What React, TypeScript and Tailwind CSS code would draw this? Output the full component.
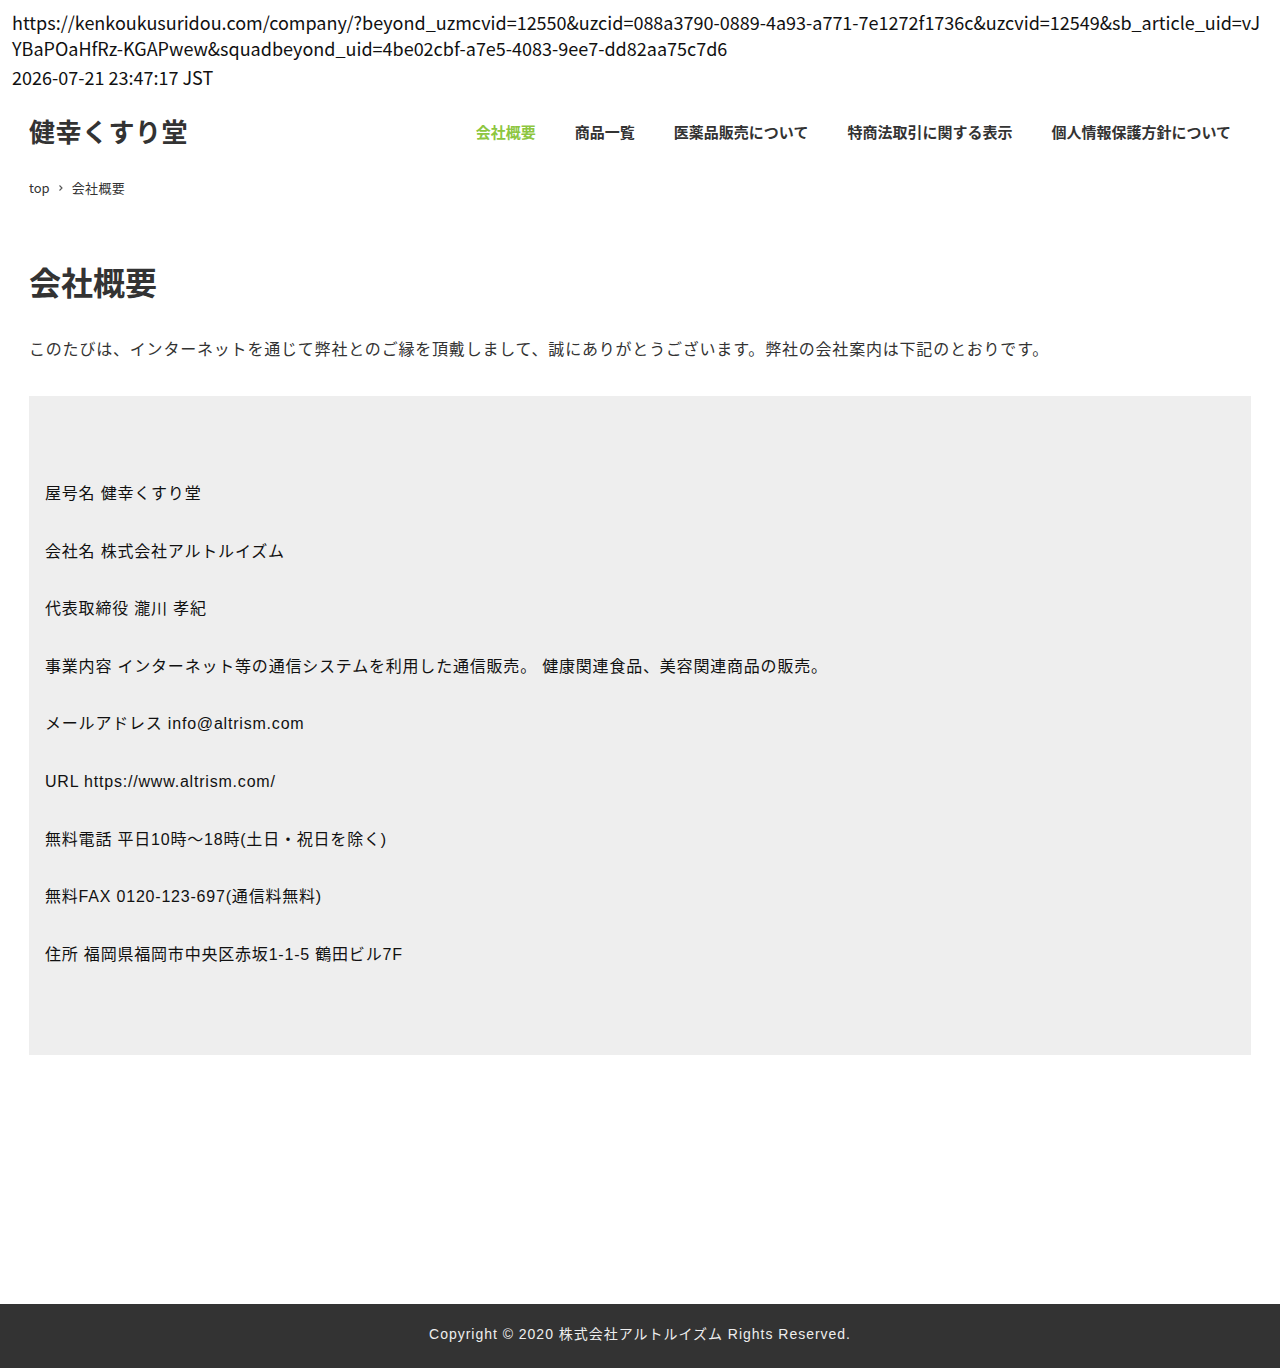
const navItems = [
  { label: '会社概要', active: true },
  { label: '商品一覧', active: false },
  { label: '医薬品販売について', active: false },
  { label: '特商法取引に関する表示', active: false },
  { label: '個人情報保護方針について', active: false },
]

const companyRows = [
  '屋号名 健幸くすり堂',
  '会社名 株式会社アルトルイズム',
  '代表取締役 瀧川 孝紀',
  '事業内容 インターネット等の通信システムを利用した通信販売。 健康関連食品、美容関連商品の販売。',
  'メールアドレス info@altrism.com',
  'URL https://www.altrism.com/',
  '無料電話 平日10時～18時(土日・祝日を除く)',
  '無料FAX 0120-123-697(通信料無料)',
  '住所 福岡県福岡市中央区赤坂1-1-5 鶴田ビル7F',
]

function PageInfo() {
  return (
    <div className="px-[12px] pt-[9px] text-[18px] leading-[26px] text-[#111] font-['Noto_Sans_CJK_JP',sans-serif]">
      <div className="whitespace-nowrap">
        https://kenkoukusuridou.com/company/?beyond_uzmcvid=12550&amp;uzcid=088a3790-0889-4a93-a771-7e1272f1736c&amp;uzcvid=12549&amp;sb_article_uid=vJ
      </div>
      <div className="whitespace-nowrap">
        YBaPOaHfRz-KGAPwew&amp;squadbeyond_uid=4be02cbf-a7e5-4083-9ee7-dd82aa75c7d6
      </div>
      <div className="mt-[3px]">2026-07-21 23:47:17 JST</div>
    </div>
  )
}

function Header() {
  return (
    <header className="flex h-[82px] items-center justify-between pl-[29px] pr-[29.5px] font-['Noto_Sans_CJK_JP',sans-serif]">
      <div className="text-[26px] font-bold leading-none text-[#333] tracking-[0.02em]">健幸くすり堂</div>
      <nav className="flex items-center pt-[1px]">
        {navItems.map(item => (
          <a
            key={item.label}
            className={`px-[19.5px] text-[15px] font-bold leading-none ${
              item.active ? 'text-[#8dc63f]' : 'text-[#333]'
            }`}
          >
            {item.label}
          </a>
        ))}
      </nav>
    </header>
  )
}

export default function App() {
  return (
    <div className="flex min-h-[1368px] flex-col bg-white text-[#333]">
      <PageInfo />
      <Header />

      <div className="mt-[6px] flex items-center gap-[6px] px-[29px] text-[13px] leading-[20px] text-[#333] font-['Noto_Sans_CJK_JP',sans-serif]">
        <span>top</span>
        <svg width="8" height="8" viewBox="0 0 8 8" className="mx-[1px]">
          <path d="M2.5 1.5 L5 4 L2.5 6.5" fill="none" stroke="#555" strokeWidth="1.1" />
        </svg>
        <span className="tracking-[0.03em]">会社概要</span>
      </div>

      <main className="px-[29px]">
        <h1 className="mt-[61px] text-[32px] font-bold leading-[45px] text-[#333] font-['Noto_Sans_CJK_JP',sans-serif]">
          会社概要
        </h1>
        <p className="mt-[30px] text-[16px] leading-[29px] tracking-[0.05em] text-[#333] font-['Noto_Sans_CJK_JP',sans-serif]">
          このたびは、インターネットを通じて弊社とのご縁を頂戴しまして、誠にありがとうございます。弊社の会社案内は下記のとおりです。
        </p>

        <div className="mt-[33px] flex flex-col gap-[32px] bg-[#eeeeee] px-4 pt-[85px] pb-[88px] text-[16px] leading-[25.6px] tracking-[0.05em] text-[#111] font-['Liberation_Sans','Noto_Sans_CJK_JP',sans-serif]">
          {companyRows.map(row => (
            <p key={row}>{row}</p>
          ))}
        </div>
      </main>

      <footer className="mt-auto flex h-[64px] items-center justify-center bg-[#333333] pb-[3px] text-[14px] tracking-[0.07em] text-[#eeeeee] font-['Liberation_Sans','Noto_Sans_CJK_JP',sans-serif]">
        Copyright © 2020 株式会社アルトルイズム Rights Reserved.
      </footer>
    </div>
  )
}
